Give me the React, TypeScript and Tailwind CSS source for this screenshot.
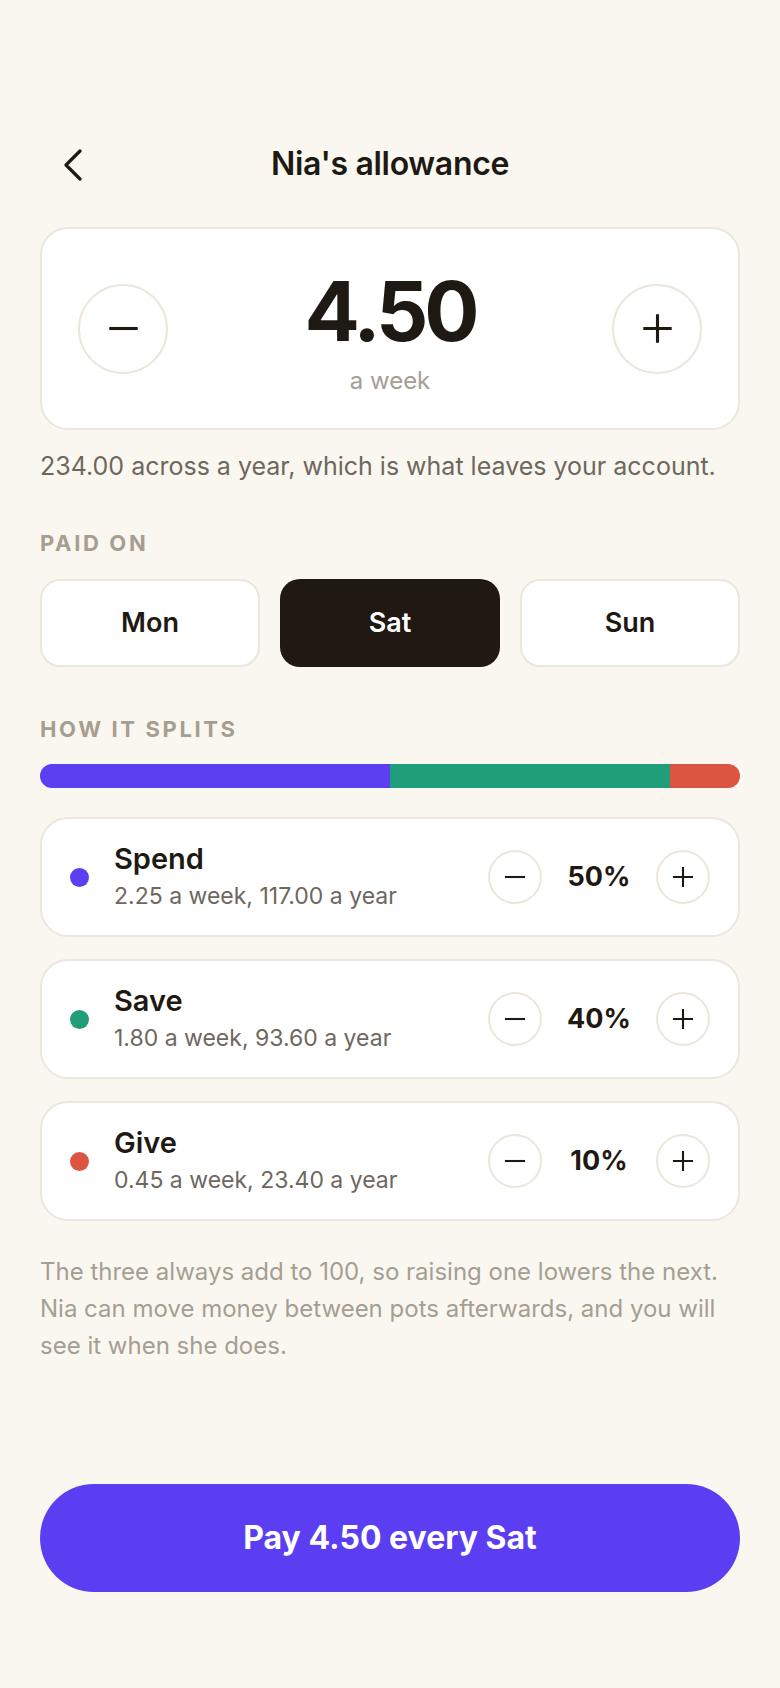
import { JSX } from 'react'

const Minus = ({ size, stroke }: { size: number; stroke: number }): JSX.Element => (
  <svg width={size} height={size} viewBox="0 0 24 24" fill="none" stroke="currentColor" strokeWidth={stroke} strokeLinecap="butt">
    <path d="M1 12h22" />
  </svg>
)

const Plus = ({ size, stroke }: { size: number; stroke: number }): JSX.Element => (
  <svg width={size} height={size} viewBox="0 0 24 24" fill="none" stroke="currentColor" strokeWidth={stroke} strokeLinecap="butt">
    <path d="M1 12h22M12 1v22" />
  </svg>
)

const pots = [
  { name: 'Spend', dot: 'bg-[#5b3ff1]', detail: '2.25 a week, 117.00 a year', pct: 50 },
  { name: 'Save', dot: 'bg-[#1f9e79]', detail: '1.80 a week, 93.60 a year', pct: 40 },
  { name: 'Give', dot: 'bg-[#dc5541]', detail: '0.45 a week, 23.40 a year', pct: 10 },
]

const days = ['Mon', 'Sat', 'Sun']

export default function App(): JSX.Element {
  return (
    <div className="min-h-screen bg-[#faf7f1] font-['Inter',sans-serif] text-[#1f1913] px-10 flex flex-col">
      <header className="pt-[134px] h-[194px] relative flex items-center justify-center">
        <button className="absolute left-[24px] top-[149px] text-[#1f1913]">
          <svg width="18" height="32" viewBox="0 0 18 32" fill="none" stroke="currentColor" strokeWidth="3.2" strokeLinecap="round" strokeLinejoin="round">
            <path d="M16 2 2 16l14 14" />
          </svg>
        </button>
        <h1 className="text-[32px] font-semibold leading-none tracking-[-0.01em]">Nia's allowance</h1>
      </header>

      <div className="mt-[33px] h-[203px] bg-white border-2 border-[#ece6dc] rounded-[28px] flex items-center justify-between px-9">
        <button className="w-[90px] h-[90px] rounded-full border-2 border-[#ece6dc] flex items-center justify-center">
          <Minus size={31} stroke={2.4} />
        </button>
        <div className="flex flex-col items-center pt-[10px]">
          <div className="text-[82px] font-bold leading-none tracking-[-0.05em]">4.50</div>
          <div className="mt-[12px] text-[24px] leading-[32px] text-[#a59e92]">a week</div>
        </div>
        <button className="w-[90px] h-[90px] rounded-full border-2 border-[#ece6dc] flex items-center justify-center">
          <Plus size={31} stroke={2.4} />
        </button>
      </div>

      <p className="mt-[20px] text-[25px] leading-[33px] text-[#6e675d]">
        234.00 across a year, which is what leaves your account.
      </p>

      <h2 className="mt-[45px] text-[22px] leading-[30px] font-bold tracking-[0.12em] text-[#a69e90]">PAID ON</h2>
      <div className="mt-[21px] grid grid-cols-3 gap-5">
        {days.map((d) => (
          <button
            key={d}
            className={
              d === 'Sat'
                ? 'h-[88px] rounded-[20px] bg-[#201812] text-white text-[27px] font-semibold'
                : 'h-[88px] rounded-[20px] bg-white border-2 border-[#ece6dc] text-[27px] font-semibold'
            }
          >
            {d}
          </button>
        ))}
      </div>

      <h2 className="mt-[47px] text-[22px] leading-[30px] font-bold tracking-[0.12em] text-[#a69e90]">HOW IT SPLITS</h2>
      <div className="mt-[20px] h-[24px] rounded-full overflow-hidden flex">
        <div className="w-1/2 bg-[#5b3ff1]" />
        <div className="w-2/5 bg-[#1f9e79]" />
        <div className="flex-1 bg-[#dc5541]" />
      </div>

      <div className="mt-[29px] flex flex-col gap-[22px]">
        {pots.map((p) => (
          <div key={p.name} className="h-[120px] bg-white border-2 border-[#ece6dc] rounded-[28px] flex items-center pl-7 pr-7">
            <span className={`w-[19px] h-[19px] rounded-full ${p.dot}`} />
            <div className="ml-[25px] flex-1">
              <div className="text-[29px] font-semibold leading-[34px]">{p.name}</div>
              <div className="mt-[4px] text-[23px] leading-[32px] text-[#6e675d]">{p.detail}</div>
            </div>
            <div className="flex items-center gap-3">
              <button className="w-[54px] h-[54px] rounded-full border-2 border-[#ece6dc] flex items-center justify-center">
                <Minus size={22} stroke={2.3} />
              </button>
              <span className="w-[90px] text-center text-[27px] font-bold">{p.pct}%</span>
              <button className="w-[54px] h-[54px] rounded-full border-2 border-[#ece6dc] flex items-center justify-center">
                <Plus size={22} stroke={2.3} />
              </button>
            </div>
          </div>
        ))}
      </div>

      <p className="mt-[32px] text-[24px] leading-[37px] text-[#a59e92]">
        The three always add to 100, so raising one lowers the next. Nia can move money between pots afterwards, and you will see it when she does.
      </p>

      <div className="mt-auto pb-[96px] pt-10">
        <button className="w-full h-[108px] rounded-full bg-[#5b3ef1] text-white text-[32px] font-bold">
          Pay 4.50 every Sat
        </button>
      </div>
    </div>
  )
}
